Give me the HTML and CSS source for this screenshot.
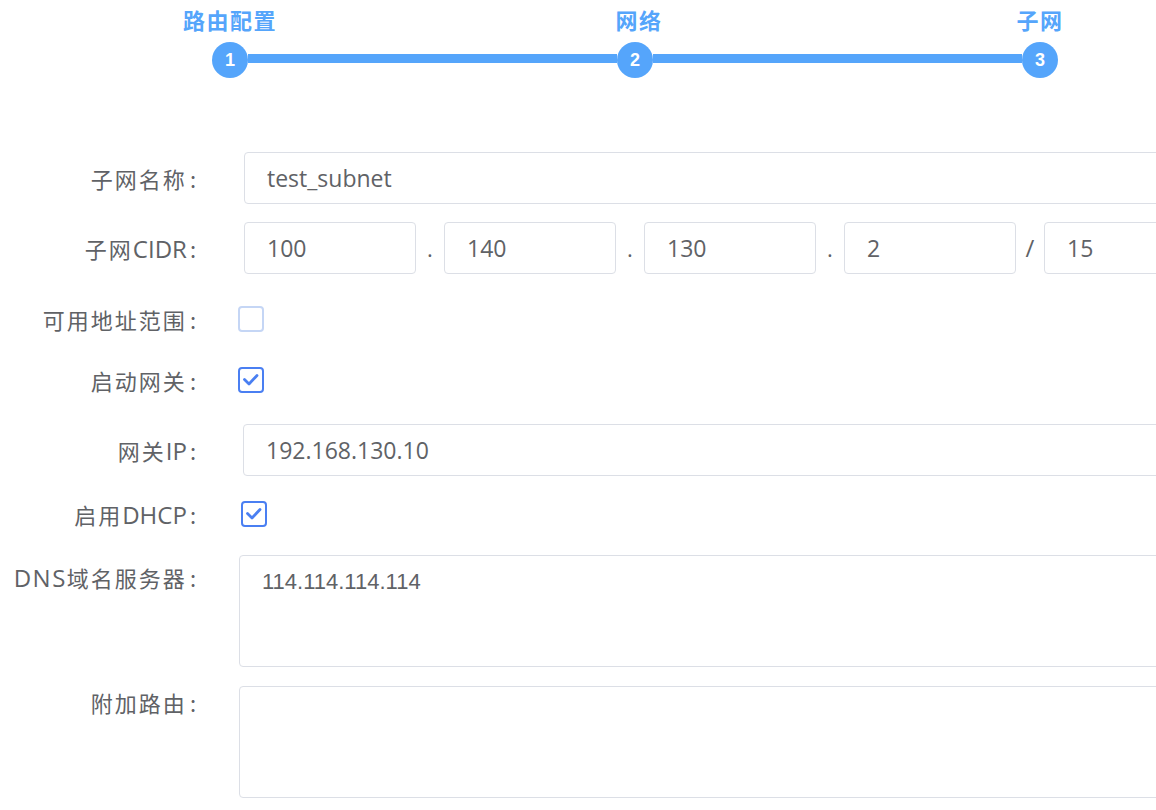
FILE: index.html
```html
<!DOCTYPE html>
<html lang="zh-CN">
<head>
<meta charset="utf-8">
<title>子网</title>
<link rel="stylesheet" href="styles.css">
</head>
<body>
<div class="steps">
  <div class="step">
    <div class="step-title">路由配置</div>
    <div class="step-icon">1</div>
  </div>
  <div class="connector"></div>
  <div class="step">
    <div class="step-title step-title-mid">网络</div>
    <div class="step-icon">2</div>
  </div>
  <div class="connector"></div>
  <div class="step">
    <div class="step-title">子网</div>
    <div class="step-icon">3</div>
  </div>
</div>

<form class="form">
  <div class="row">
    <label class="label">子网名称<span class="colon">:</span></label>
    <div class="ctl ctl-text"><input class="input" type="text" value="test_subnet"></div>
  </div>

  <div class="row row-cidr">
    <label class="label">子网<span class="lat">CIDR</span><span class="colon">:</span></label>
    <div class="ctl ctl-text cidr">
      <input class="input seg" type="text" value="100">
      <span class="sep">.</span>
      <input class="input seg" type="text" value="140">
      <span class="sep">.</span>
      <input class="input seg" type="text" value="130">
      <span class="sep">.</span>
      <input class="input seg" type="text" value="2">
      <span class="sep sep-slash">/</span>
      <input class="input seg" type="text" value="15">
    </div>
  </div>

  <div class="row row-range">
    <label class="label">可用地址范围<span class="colon">:</span></label>
    <div class="ctl"><span class="checkbox"></span></div>
  </div>

  <div class="row row-gw">
    <label class="label">启动网关<span class="colon">:</span></label>
    <div class="ctl">
      <span class="checkbox checked">
        <svg viewBox="0 0 26 26" width="26" height="26"><polyline points="6.5,12.5 11,17 19,8.5" fill="none" stroke="#4a7ff2" stroke-width="2.8" stroke-linecap="round" stroke-linejoin="round"/></svg>
      </span>
    </div>
  </div>

  <div class="row row-gwip">
    <label class="label">网关<span class="lat">IP</span><span class="colon">:</span></label>
    <div class="ctl ctl-gwip"><input class="input" type="text" value="192.168.130.10"></div>
  </div>

  <div class="row row-dhcp">
    <label class="label">启用<span class="lat">DHCP</span><span class="colon">:</span></label>
    <div class="ctl ctl-dhcp">
      <span class="checkbox checked">
        <svg viewBox="0 0 26 26" width="26" height="26"><polyline points="6.5,12.5 11,17 19,8.5" fill="none" stroke="#4a7ff2" stroke-width="2.8" stroke-linecap="round" stroke-linejoin="round"/></svg>
      </span>
    </div>
  </div>

  <div class="row row-area row-dns">
    <label class="label label-dns"><span class="lat">DNS</span>域名服务器<span class="colon">:</span></label>
    <div class="ctl ctl-area"><textarea class="textarea">114.114.114.114</textarea></div>
  </div>

  <div class="row row-area row-route">
    <label class="label label-route">附加路由<span class="colon">:</span></label>
    <div class="ctl ctl-area"><textarea class="textarea"></textarea></div>
  </div>
</form>
</body>
</html>
```

FILE: styles.css
```css
html, body {
  margin: 0;
  padding: 0;
  overflow: hidden;
  background: #ffffff;
}

body {
  width: 1156px;
  height: 810px;
  font-family: "Open Sans", "Noto Sans CJK SC", sans-serif;
  color: #606266;
}

/* ---------- steps ---------- */
.steps {
  display: flex;
  align-items: flex-end;
  margin-left: 212px;
  width: 846px;
  padding-top: 4px;
}

.step {
  width: 36px;
  flex: none;
  display: flex;
  flex-direction: column;
  align-items: center;
}

.step-title {
  font-family: "Noto Sans CJK SC", sans-serif;
  font-size: 22px;
  font-weight: 700;
  line-height: 30px;
  letter-spacing: 1.5px;
  color: #55a5fb;
  white-space: nowrap;
  margin-bottom: 8px;
}

.step-title-mid {
  margin-left: 8px;
}

.step-icon {
  width: 36px;
  height: 36px;
  border-radius: 50%;
  background: #55a5fb;
  color: #ffffff;
  font-family: "Liberation Sans", Arial, sans-serif;
  font-weight: 700;
  font-size: 18px;
  line-height: 36px;
  text-align: center;
}

.connector {
  flex: 1;
  height: 9px;
  background: #55a5fb;
  margin-bottom: 15px;
}

/* ---------- form ---------- */
.form {
  width: 1400px;
  margin-top: 74px;
  display: flex;
  flex-direction: column;
}

.row {
  display: flex;
  align-items: center;
}

.label {
  width: 196px;
  height: 30px;
  flex: none;
  text-align: right;
  font-family: "Noto Sans CJK SC", sans-serif;
  font-size: 22px;
  line-height: 30px;
  letter-spacing: 2px;
  color: #606266;
  white-space: nowrap;
}

.lat {
  font-family: "Open Sans", sans-serif;
  font-size: 24px;
  line-height: 20px;
  letter-spacing: 0;
}

.label-dns .lat {
  letter-spacing: 1.5px;
}

.colon {
  margin-left: 3px;
  letter-spacing: 0;
}

.ctl {
  margin-left: 42px;
  flex: 1;
  display: flex;
  align-items: center;
}

.ctl-text { margin-left: 48px; }
.ctl-gwip { margin-left: 47px; }
.ctl-dhcp { margin-left: 45px; }
.ctl-area { margin-left: 43px; }

.input {
  box-sizing: border-box;
  height: 52px;
  width: 100%;
  border: 1px solid #dcdfe6;
  border-radius: 4px;
  padding: 0 0 0 22px;
  font-family: "Open Sans", sans-serif;
  font-size: 23px;
  color: #606266;
  background: #ffffff;
  outline: none;
  margin: 0;
}

.row-cidr { margin-top: 18px; }

.cidr .seg {
  width: 172px;
  flex: none;
}

.sep {
  width: 28px;
  flex: none;
  text-align: center;
  font-family: "Open Sans", sans-serif;
  font-size: 22px;
  color: #606266;
  line-height: 52px;
}

.sep-slash {
  font-size: 24px;
}

.row-range { margin-top: 30px; }
.row-gw { margin-top: 31px; }
.row-gwip { margin-top: 29px; }
.row-dhcp { margin-top: 23px; }
.row-dns { margin-top: 26px; }
.row-route { margin-top: 19px; }

.checkbox {
  box-sizing: border-box;
  width: 26px;
  height: 26px;
  border: 2.5px solid #c5d6f5;
  border-radius: 4px;
  background: #ffffff;
  display: flex;
  align-items: center;
  justify-content: center;
}

.checkbox.checked {
  border-color: #4a7ff2;
}

.checkbox svg {
  flex: none;
}

.row-area {
  align-items: flex-start;
}

.label-dns { padding-top: 7px; }
.label-route { padding-top: 1px; }

.textarea {
  box-sizing: border-box;
  width: 100%;
  height: 112px;
  border: 1px solid #dcdfe6;
  border-radius: 4px;
  padding: 12px 0 0 22px;
  font-family: "Liberation Sans", Arial, sans-serif;
  font-size: 22px;
  line-height: 28px;
  color: #606266;
  resize: none;
  outline: none;
  margin: 0;
  display: block;
}
```
